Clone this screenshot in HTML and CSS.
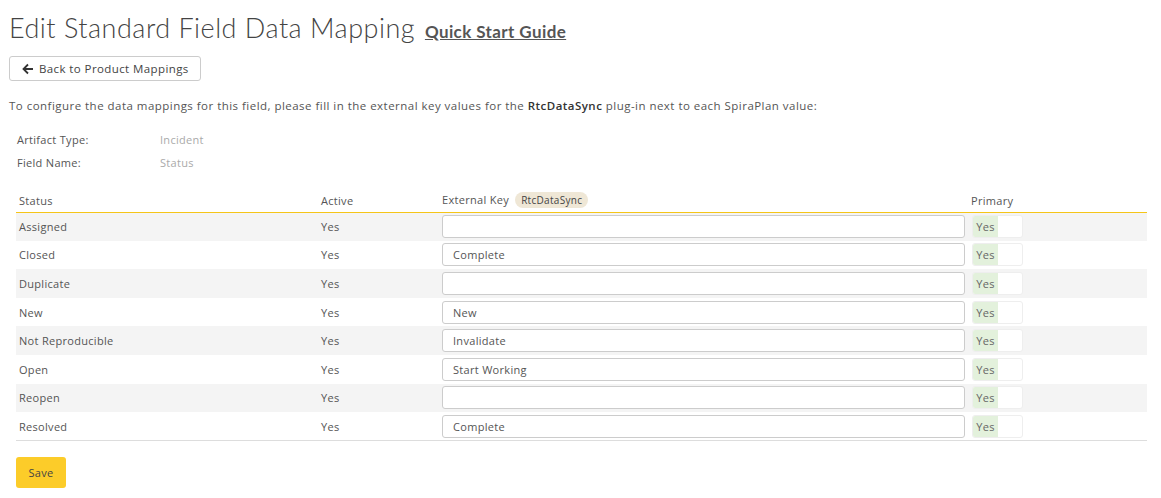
FILE: index.html
```html
<!DOCTYPE html>
<html>
<head>
<meta charset="utf-8">
<link rel="stylesheet" href="styles.css">
</head>
<body>
<div class="page">
  <h1 class="title">Edit Standard Field Data Mapping <a class="guide" href="#">Quick Start Guide</a></h1>
  <div class="toolbar">
    <button class="btn-back"><svg width="12" height="12" viewBox="0 0 12 12"><path d="M6 1.5 L1.5 6 L6 10.5 M1.5 6 H11" fill="none" stroke="#333" stroke-width="1.8"/></svg>Back to Product Mappings</button>
  </div>
  <p class="intro">To configure the data mappings for this field, please fill in the external key values for the <b>RtcDataSync</b> plug-in next to each SpiraPlan value:</p>
  <div class="meta">
    <div class="meta-row"><span class="meta-label">Artifact Type:</span><span class="meta-value">Incident</span></div>
    <div class="meta-row"><span class="meta-label">Field Name:</span><span class="meta-value">Status</span></div>
  </div>
  <table class="grid">
    <thead>
      <tr><th class="c-status">Status</th><th class="c-active">Active</th><th class="c-key">External Key <span class="badge">RtcDataSync</span></th><th class="c-primary">Primary</th></tr>
    </thead>
    <tbody>
      <tr><td>Assigned</td><td>Yes</td><td><input class="key" value=""></td><td><span class="toggle"><span class="on">Yes</span></span></td></tr>
      <tr><td>Closed</td><td>Yes</td><td><input class="key" value="Complete"></td><td><span class="toggle"><span class="on">Yes</span></span></td></tr>
      <tr><td>Duplicate</td><td>Yes</td><td><input class="key" value=""></td><td><span class="toggle"><span class="on">Yes</span></span></td></tr>
      <tr><td>New</td><td>Yes</td><td><input class="key" value="New"></td><td><span class="toggle"><span class="on">Yes</span></span></td></tr>
      <tr><td>Not Reproducible</td><td>Yes</td><td><input class="key" value="Invalidate"></td><td><span class="toggle"><span class="on">Yes</span></span></td></tr>
      <tr><td>Open</td><td>Yes</td><td><input class="key" value="Start Working"></td><td><span class="toggle"><span class="on">Yes</span></span></td></tr>
      <tr><td>Reopen</td><td>Yes</td><td><input class="key" value=""></td><td><span class="toggle"><span class="on">Yes</span></span></td></tr>
      <tr><td>Resolved</td><td>Yes</td><td><input class="key" value="Complete"></td><td><span class="toggle"><span class="on">Yes</span></span></td></tr>
    </tbody>
  </table>
  <button class="btn-save">Save</button>
</div>
</body>
</html>
```
FILE: styles.css
```css
* { box-sizing: border-box; }
body { margin: 0; font-family: "Open Sans", "Liberation Sans", sans-serif; color: #555; font-size: 11px; letter-spacing: 0.3px; }
.page { padding: 0 14px 0 9px; }
.title { margin: 0; padding-top: 10px; font-family: Lato, "Open Sans", sans-serif; font-weight: 300; font-size: 27px; color: #444; line-height: 36px; letter-spacing: 0.5px; }
.guide { font-family: Lato, sans-serif; font-weight: 700; font-size: 17px; color: #555; text-decoration: underline; margin-left: 2px; letter-spacing: 0.4px; }
.toolbar { margin-top: 6px; }
.btn-back { display: inline-flex; align-items: center; gap: 5px; height: 25px; padding: 0 11px 0 12px; background: #fff; border: 1px solid #ccc; border-radius: 3px; font-family: inherit; font-size: 11.5px; letter-spacing: 0.4px; color: #444; }
.intro { margin: 17px 0 0; font-size: 11.5px; letter-spacing: 0.47px; line-height: 16px; }
.intro b { font-weight: 600; color: #333; }
.meta { margin: 14px 0 0 8px; }
.meta-row { display: flex; height: 23px; align-items: center; }
.meta-label { width: 143px; }
.meta-value { color: #aaa; }
.grid { margin: 15px 0 0 7px; width: 1131px; border-collapse: collapse; border-bottom: 1px solid #ddd; }
.grid th { text-align: left; font-weight: 400; height: 23px; padding: 0 3px; border-bottom: 1px solid #f5c518; vertical-align: middle; }
.c-status { width: 302px; }
.c-active { width: 121px; }
.c-key { width: 529px; }
.badge { display: inline-block; background: #efe7d6; border-radius: 9px; padding: 1px 6px; font-size: 10px; color: #444; margin-left: 3px; }
.grid td { height: 28.6px; padding: 0 3px; vertical-align: middle; }
.grid tbody tr:nth-child(odd) { background: #f4f4f4; }
.key { width: 523px; height: 23px; border: 1px solid #ccc; border-radius: 3px; padding: 0 10px; font-family: inherit; font-size: 11px; letter-spacing: 0.3px; color: #555; background: #fff; display: block; }
.toggle { display: flex; width: 51px; height: 23px; margin-left: 1px; border: 1px solid #eee; border-radius: 3px; background: #fff; overflow: hidden; }
.toggle .on { width: 25px; background: #e3f1dc; display: flex; align-items: center; justify-content: center; color: #666; }
.btn-save { margin: 16px 0 0 7px; width: 50px; height: 31px; background: #fccc29; border: none; border-radius: 3px; font-family: inherit; font-size: 11px; letter-spacing: 0.3px; color: #444; }
```
